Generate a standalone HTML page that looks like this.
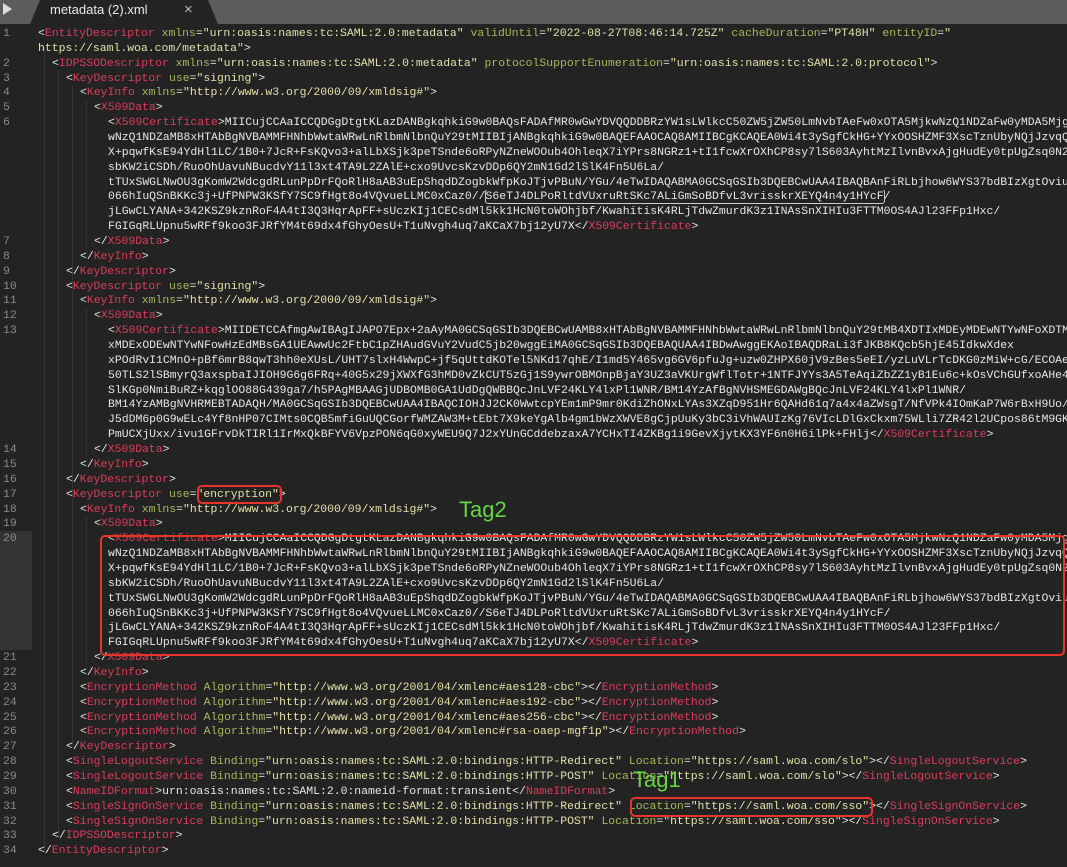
<!DOCTYPE html>
<html><head><meta charset="utf-8"><style>
body{margin:0;width:1067px;height:867px;overflow:hidden;background:#232323;font-family:"Liberation Mono",monospace;font-size:11.45px;color:#e6e6e6;position:relative}
.tabbar{position:absolute;left:0;top:0;width:1067px;height:24px;background:#5c5c5c}
.tab{position:absolute;left:30px;top:0;width:188px;height:24px;background:#232323;clip-path:polygon(10px 0,178px 0,188px 24px,0 24px)}
.tabt{position:absolute;left:50px;top:2px;font-family:"Liberation Sans",sans-serif;font-size:13px;color:#e8e8e8}
.x{position:absolute;left:184px;top:1px;font-family:"Liberation Sans",sans-serif;font-size:15px;color:#bbb}
.play{position:absolute;left:3px;top:3px;width:0;height:0;border-left:9px solid #ddd;border-top:6px solid transparent;border-bottom:6px solid transparent}
#code{position:absolute;left:0;top:27px;width:1067px}
.r{height:14.87px;line-height:14.87px;white-space:pre;overflow:hidden;position:relative}
.n{position:absolute;left:3px;color:#8a8a8a}
.c{position:absolute}
.t{color:#dd3c5c}.a{color:#a8b85a}.s{color:#e4e0a8}
.g{position:absolute;top:48px;width:1px;height:805px;background:#353535}
.box{position:absolute;border:2.5px solid #e8352a;border-radius:5px}
.tagl{position:absolute;color:#66d443;font-family:"Liberation Sans",sans-serif;font-size:22px}
.sel{outline:1px solid #ccc;border-radius:2px}
</style></head><body>
<div class="tabbar"><div class="play"></div><div class="tab"></div><div class="tabt">metadata (2).xml</div><div class="x">×</div></div>
<div style="position:absolute;left:0;top:531px;width:32px;height:119px;background:#333"></div>
<div class="g" style="left:44px"></div><div class="g" style="left:58px;top:70px;height:768px"></div><div class="g" style="left:72px;top:85px;height:660px"></div><div class="g" style="left:86px;top:100px;height:150px"></div><div class="g" style="left:86px;top:308px;height:150px"></div><div class="g" style="left:86px;top:516px;height:150px"></div>
<div id="code">
<div class="r"><span class="n">1</span><span class="c" style="left:38px">&lt;<span class="t">EntityDescriptor</span> <span class="a">xmlns</span>=<span class="s">"urn:oasis:names:tc:SAML:2.0:metadata"</span> <span class="a">validUntil</span>=<span class="s">"2022-08-27T08:46:14.725Z"</span> <span class="a">cacheDuration</span>=<span class="s">"PT48H"</span> <span class="a">entityID</span>=<span class="s">"</span></span></div>
<div class="r"><span class="c s" style="left:38px">https://saml.woa.com/metadata"<span style="color:#e6e6e6">&gt;</span></span></div>
<div class="r"><span class="n">2</span><span class="c" style="left:52px">&lt;<span class="t">IDPSSODescriptor</span> <span class="a">xmlns</span>=<span class="s">"urn:oasis:names:tc:SAML:2.0:metadata"</span> <span class="a">protocolSupportEnumeration</span>=<span class="s">"urn:oasis:names:tc:SAML:2.0:protocol"</span>&gt;</span></div>
<div class="r"><span class="n">3</span><span class="c" style="left:66px">&lt;<span class="t">KeyDescriptor</span> <span class="a">use</span>=<span class="s">"signing"</span>&gt;</span></div>
<div class="r"><span class="n">4</span><span class="c" style="left:80px">&lt;<span class="t">KeyInfo</span> <span class="a">xmlns</span>=<span class="s">"http://www.w3.org/2000/09/xmldsig#"</span>&gt;</span></div>
<div class="r"><span class="n">5</span><span class="c" style="left:94px">&lt;<span class="t">X509Data</span>&gt;</span></div>
<div class="r"><span class="n">6</span><span class="c" style="left:108px">&lt;<span class="t">X509Certificate</span>&gt;MIICujCCAaICCQDGgDtgtKLazDANBgkqhkiG9w0BAQsFADAfMR0wGwYDVQQDDBRzYW1sLWlkcC50ZW5jZW50LmNvbTAeFw0xOTA5MjkwNzQ1NDZaFw0yMDA5Mjg</span></div>
<div class="r"><span class="c" style="left:108px">wNzQ1NDZaMB8xHTAbBgNVBAMMFHNhbWwtaWRwLnRlbmNlbnQuY29tMIIBIjANBgkqhkiG9w0BAQEFAAOCAQ8AMIIBCgKCAQEA0Wi4t3ySgfCkHG+YYxOOSHZMF3XscTznUbyNQjJzvqQ</span></div>
<div class="r"><span class="c" style="left:108px">X+pqwfKsE94YdHl1LC/1B0+7JcR+FsKQvo3+alLbXSjk3peTSnde6oRPyNZneWOOub4OhleqX7iYPrs8NGRz1+tI1fcwXrOXhCP8sy7lS603AyhtMzIlvnBvxAjgHudEy0tpUgZsq0N2</span></div>
<div class="r"><span class="c" style="left:108px">sbKW2iCSDh/RuoOhUavuNBucdvY11l3xt4TA9L2ZAlE+cxo9UvcsKzvDDp6QY2mN1Gd2lSlK4Fn5U6La/</span></div>
<div class="r"><span class="c" style="left:108px">tTUxSWGLNwOU3gKomW2WdcgdRLunPpDrFQoRlH8aAB3uEpShqdDZogbkWfpKoJTjvPBuN/YGu/4eTwIDAQABMA0GCSqGSIb3DQEBCwUAA4IBAQBAnFiRLbjhow6WYS37bdBIzXgtOviu</span></div>
<div class="r"><span class="c" style="left:108px">066hIuQSnBKKc3j+UfPNPW3KSfY7SC9fHgt8o4VQvueLLMC0xCaz0//<span class="sel">S6eTJ4DLPoRltdVUxruRtSKc7ALiGmSoBDfvL3vrisskrXEYQ4n4y1HYcF</span>/</span></div>
<div class="r"><span class="c" style="left:108px">jLGwCLYANA+342KSZ9kznRoF4A4tI3Q3HqrApFF+sUczKIj1CECsdMl5kk1HcN0toWOhjbf/KwahitisK4RLjTdwZmurdK3z1INAsSnXIHIu3FTTM0OS4AJl23FFp1Hxc/</span></div>
<div class="r"><span class="c" style="left:108px">FGIGqRLUpnu5wRFf9koo3FJRfYM4t69dx4fGhyOesU+T1uNvgh4uq7aKCaX7bj12yU7X&lt;/<span class="t">X509Certificate</span>&gt;</span></div>
<div class="r"><span class="n">7</span><span class="c" style="left:94px">&lt;/<span class="t">X509Data</span>&gt;</span></div>
<div class="r"><span class="n">8</span><span class="c" style="left:80px">&lt;/<span class="t">KeyInfo</span>&gt;</span></div>
<div class="r"><span class="n">9</span><span class="c" style="left:66px">&lt;/<span class="t">KeyDescriptor</span>&gt;</span></div>
<div class="r"><span class="n">10</span><span class="c" style="left:66px">&lt;<span class="t">KeyDescriptor</span> <span class="a">use</span>=<span class="s">"signing"</span>&gt;</span></div>
<div class="r"><span class="n">11</span><span class="c" style="left:80px">&lt;<span class="t">KeyInfo</span> <span class="a">xmlns</span>=<span class="s">"http://www.w3.org/2000/09/xmldsig#"</span>&gt;</span></div>
<div class="r"><span class="n">12</span><span class="c" style="left:94px">&lt;<span class="t">X509Data</span>&gt;</span></div>
<div class="r"><span class="n">13</span><span class="c" style="left:108px">&lt;<span class="t">X509Certificate</span>&gt;MIIDETCCAfmgAwIBAgIJAPO7Epx+2aAyMA0GCSqGSIb3DQEBCwUAMB8xHTAbBgNVBAMMFHNhbWwtaWRwLnRlbmNlbnQuY29tMB4XDTIxMDEyMDEwNTYwNFoXDTM</span></div>
<div class="r"><span class="c" style="left:108px">xMDExODEwNTYwNFowHzEdMBsGA1UEAwwUc2FtbC1pZHAudGVuY2VudC5jb20wggEiMA0GCSqGSIb3DQEBAQUAA4IBDwAwggEKAoIBAQDRaLi3fJKB8KQcb5hjE45IdkwXdex</span></div>
<div class="r"><span class="c" style="left:108px">xPOdRvI1CMnO+pBf6mrB8qwT3hh0eXUsL/UHT7slxH4WwpC+jf5qUttdKOTel5NKd17qhE/I1md5Y465vg6GV6pfuJg+uzw0ZHPX60jV9zBes5eEI/yzLuVLrTcDKG0zMiW+cG/ECOAe</span></div>
<div class="r"><span class="c" style="left:108px">50TLS2lSBmyrQ3axspbaIJIOH9G6g6FRq+40G5x29jXWXfG3hMD0vZkCUT5zGj1S9ywrOBMOnpBjaY3UZ3aVKUrgWflTotr+1NTFJYYs3A5TeAqiZbZZ1yB1Eu6c+kOsVChGUfxoAHe4</span></div>
<div class="r"><span class="c" style="left:108px">SlKGp0NmiBuRZ+kqglOO88G439ga7/h5PAgMBAAGjUDBOMB0GA1UdDgQWBBQcJnLVF24KLY4lxPl1WNR/BM14YzAfBgNVHSMEGDAWgBQcJnLVF24KLY4lxPl1WNR/</span></div>
<div class="r"><span class="c" style="left:108px">BM14YzAMBgNVHRMEBTADAQH/MA0GCSqGSIb3DQEBCwUAA4IBAQCIOHJJ2CK0WwtcpYEm1mP9mr0KdiZhONxLYAs3XZqD951Hr6QAHd61q7a4x4aZWsgT/NfVPk4IOmKaP7W6rBxH9Uo/</span></div>
<div class="r"><span class="c" style="left:108px">J5dDM6p0G9wELc4Yf8nHP07CIMts0CQB5mfiGuUQCGorfWMZAW3M+tEbt7X9keYgAlb4gm1bWzXWVE8gCjpUuKy3bC3iVhWAUIzKg76VIcLDlGxCkxm75WLli7ZR42l2UCpos86tM9GK</span></div>
<div class="r"><span class="c" style="left:108px">PmUCXjUxx/ivu1GFrvDkTIRl1IrMxQkBFYV6VpzPON6qG0xyWEU9Q7J2xYUnGCddebzaxA7YCHxTI4ZKBg1i9GevXjytKX3YF6n0H6ilPk+FHlj&lt;/<span class="t">X509Certificate</span>&gt;</span></div>
<div class="r"><span class="n">14</span><span class="c" style="left:94px">&lt;/<span class="t">X509Data</span>&gt;</span></div>
<div class="r"><span class="n">15</span><span class="c" style="left:80px">&lt;/<span class="t">KeyInfo</span>&gt;</span></div>
<div class="r"><span class="n">16</span><span class="c" style="left:66px">&lt;/<span class="t">KeyDescriptor</span>&gt;</span></div>
<div class="r"><span class="n">17</span><span class="c" style="left:66px">&lt;<span class="t">KeyDescriptor</span> <span class="a">use</span>=<span class="s">"encryption"</span>&gt;</span></div>
<div class="r"><span class="n">18</span><span class="c" style="left:80px">&lt;<span class="t">KeyInfo</span> <span class="a">xmlns</span>=<span class="s">"http://www.w3.org/2000/09/xmldsig#"</span>&gt;</span></div>
<div class="r"><span class="n">19</span><span class="c" style="left:94px">&lt;<span class="t">X509Data</span>&gt;</span></div>
<div class="r"><span class="n">20</span><span class="c" style="left:108px">&lt;<span class="t">X509Certificate</span>&gt;MIICujCCAaICCQDGgDtgtKLazDANBgkqhkiG9w0BAQsFADAfMR0wGwYDVQQDDBRzYW1sLWlkcC50ZW5jZW50LmNvbTAeFw0xOTA5MjkwNzQ1NDZaFw0yMDA5Mjg</span></div>
<div class="r"><span class="c" style="left:108px">wNzQ1NDZaMB8xHTAbBgNVBAMMFHNhbWwtaWRwLnRlbmNlbnQuY29tMIIBIjANBgkqhkiG9w0BAQEFAAOCAQ8AMIIBCgKCAQEA0Wi4t3ySgfCkHG+YYxOOSHZMF3XscTznUbyNQjJzvqQ</span></div>
<div class="r"><span class="c" style="left:108px">X+pqwfKsE94YdHl1LC/1B0+7JcR+FsKQvo3+alLbXSjk3peTSnde6oRPyNZneWOOub4OhleqX7iYPrs8NGRz1+tI1fcwXrOXhCP8sy7lS603AyhtMzIlvnBvxAjgHudEy0tpUgZsq0N2</span></div>
<div class="r"><span class="c" style="left:108px">sbKW2iCSDh/RuoOhUavuNBucdvY11l3xt4TA9L2ZAlE+cxo9UvcsKzvDDp6QY2mN1Gd2lSlK4Fn5U6La/</span></div>
<div class="r"><span class="c" style="left:108px">tTUxSWGLNwOU3gKomW2WdcgdRLunPpDrFQoRlH8aAB3uEpShqdDZogbkWfpKoJTjvPBuN/YGu/4eTwIDAQABMA0GCSqGSIb3DQEBCwUAA4IBAQBAnFiRLbjhow6WYS37bdBIzXgtOviu</span></div>
<div class="r"><span class="c" style="left:108px">066hIuQSnBKKc3j+UfPNPW3KSfY7SC9fHgt8o4VQvueLLMC0xCaz0//S6eTJ4DLPoRltdVUxruRtSKc7ALiGmSoBDfvL3vrisskrXEYQ4n4y1HYcF/</span></div>
<div class="r"><span class="c" style="left:108px">jLGwCLYANA+342KSZ9kznRoF4A4tI3Q3HqrApFF+sUczKIj1CECsdMl5kk1HcN0toWOhjbf/KwahitisK4RLjTdwZmurdK3z1INAsSnXIHIu3FTTM0OS4AJl23FFp1Hxc/</span></div>
<div class="r"><span class="c" style="left:108px">FGIGqRLUpnu5wRFf9koo3FJRfYM4t69dx4fGhyOesU+T1uNvgh4uq7aKCaX7bj12yU7X&lt;/<span class="t">X509Certificate</span>&gt;</span></div>
<div class="r"><span class="n">21</span><span class="c" style="left:94px">&lt;/<span class="t">X509Data</span>&gt;</span></div>
<div class="r"><span class="n">22</span><span class="c" style="left:80px">&lt;/<span class="t">KeyInfo</span>&gt;</span></div>
<div class="r"><span class="n">23</span><span class="c" style="left:80px">&lt;<span class="t">EncryptionMethod</span> <span class="a">Algorithm</span>=<span class="s">"http://www.w3.org/2001/04/xmlenc#aes128-cbc"</span>&gt;&lt;/<span class="t">EncryptionMethod</span>&gt;</span></div>
<div class="r"><span class="n">24</span><span class="c" style="left:80px">&lt;<span class="t">EncryptionMethod</span> <span class="a">Algorithm</span>=<span class="s">"http://www.w3.org/2001/04/xmlenc#aes192-cbc"</span>&gt;&lt;/<span class="t">EncryptionMethod</span>&gt;</span></div>
<div class="r"><span class="n">25</span><span class="c" style="left:80px">&lt;<span class="t">EncryptionMethod</span> <span class="a">Algorithm</span>=<span class="s">"http://www.w3.org/2001/04/xmlenc#aes256-cbc"</span>&gt;&lt;/<span class="t">EncryptionMethod</span>&gt;</span></div>
<div class="r"><span class="n">26</span><span class="c" style="left:80px">&lt;<span class="t">EncryptionMethod</span> <span class="a">Algorithm</span>=<span class="s">"http://www.w3.org/2001/04/xmlenc#rsa-oaep-mgf1p"</span>&gt;&lt;/<span class="t">EncryptionMethod</span>&gt;</span></div>
<div class="r"><span class="n">27</span><span class="c" style="left:66px">&lt;/<span class="t">KeyDescriptor</span>&gt;</span></div>
<div class="r"><span class="n">28</span><span class="c" style="left:66px">&lt;<span class="t">SingleLogoutService</span> <span class="a">Binding</span>=<span class="s">"urn:oasis:names:tc:SAML:2.0:bindings:HTTP-Redirect"</span> <span class="a">Location</span>=<span class="s">"https://saml.woa.com/slo"</span>&gt;&lt;/<span class="t">SingleLogoutService</span>&gt;</span></div>
<div class="r"><span class="n">29</span><span class="c" style="left:66px">&lt;<span class="t">SingleLogoutService</span> <span class="a">Binding</span>=<span class="s">"urn:oasis:names:tc:SAML:2.0:bindings:HTTP-POST"</span> <span class="a">Location</span>=<span class="s">"https://saml.woa.com/slo"</span>&gt;&lt;/<span class="t">SingleLogoutService</span>&gt;</span></div>
<div class="r"><span class="n">30</span><span class="c" style="left:66px">&lt;<span class="t">NameIDFormat</span>&gt;urn:oasis:names:tc:SAML:2.0:nameid-format:transient&lt;/<span class="t">NameIDFormat</span>&gt;</span></div>
<div class="r"><span class="n">31</span><span class="c" style="left:66px">&lt;<span class="t">SingleSignOnService</span> <span class="a">Binding</span>=<span class="s">"urn:oasis:names:tc:SAML:2.0:bindings:HTTP-Redirect"</span> <span class="a">Location</span>=<span class="s">"https://saml.woa.com/sso"</span>&gt;&lt;/<span class="t">SingleSignOnService</span>&gt;</span></div>
<div class="r"><span class="n">32</span><span class="c" style="left:66px">&lt;<span class="t">SingleSignOnService</span> <span class="a">Binding</span>=<span class="s">"urn:oasis:names:tc:SAML:2.0:bindings:HTTP-POST"</span> <span class="a">Location</span>=<span class="s">"https://saml.woa.com/sso"</span>&gt;&lt;/<span class="t">SingleSignOnService</span>&gt;</span></div>
<div class="r"><span class="n">33</span><span class="c" style="left:52px">&lt;/<span class="t">IDPSSODescriptor</span>&gt;</span></div>
<div class="r"><span class="n">34</span><span class="c" style="left:38px">&lt;/<span class="t">EntityDescriptor</span>&gt;</span></div>
</div>
<div class="box" style="left:197px;top:485px;width:81px;height:15px"></div>
<div class="box" style="left:100px;top:535px;width:961px;height:117px"></div>
<div class="box" style="left:630px;top:797px;width:239px;height:16px"></div>
<div class="tagl" style="left:459px;top:497px">Tag2</div>
<div class="tagl" style="left:633px;top:767px">Tag1</div>
</body></html>
